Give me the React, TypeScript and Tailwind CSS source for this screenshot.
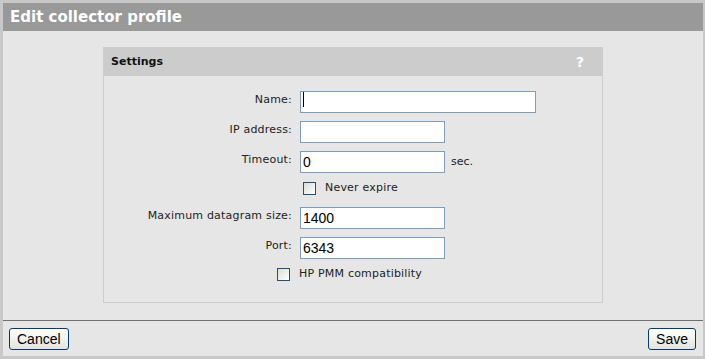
import React from 'react';

const labelFont = { fontFamily: '"DejaVu Sans", Verdana, sans-serif' };

const Field = ({ value, width = 'w-[145px]', caret = false }: { value?: string; width?: string; caret?: boolean }) => (
  <div className={`relative ${width} h-[22px]`}>
    <input
      type="text"
      readOnly
      defaultValue={value}
      className="w-full h-full border border-[#7f9db9] bg-white px-[2px] text-[14px] text-black outline-none font-['Liberation_Sans',Arial,sans-serif]"
    />
    {caret && <span className="absolute left-[3px] top-[3px] w-px h-[15px] bg-black" />}
  </div>
);

const Label = ({ children }: { children: React.ReactNode }) => (
  <div className="text-right text-[11px] text-[#222222] tracking-[0.2px]" style={labelFont}>
    {children}
  </div>
);

const Check = ({ label }: { label: string }) => (
  <div className="flex items-center h-[18px]">
    <span className="w-[13px] h-[13px] border border-[#1c5180] bg-gradient-to-br from-[#dcdcd7] to-white" />
    <span className="ml-[9px] text-[11px] text-[#222222] tracking-[0.2px]" style={labelFont}>
      {label}
    </span>
  </div>
);

const Button = ({ children }: { children: React.ReactNode }) => (
  <button className="h-[22px] px-[7px] border border-[#003c74] rounded-[3px] bg-gradient-to-b from-white to-[#e3e3db] text-[14px] text-black leading-none font-['Liberation_Sans',Arial,sans-serif]">
    {children}
  </button>
);

export default function App() {
  return (
    <div className="w-[705px] h-[359px] border-[3px] border-r-2 border-[#c8c8c8] bg-[#e6e6e6] flex flex-col">
      <div className="h-[28px] bg-[#999999] flex items-center pl-[7px] text-white font-bold text-[15px]" style={labelFont}>
        Edit collector profile
      </div>

      <div className="flex-1 pt-[16px]">
        <div className="mx-auto w-[500px] h-[256px] border border-[#cccccc]">
          <div className="h-[28px] bg-[#cccccc] flex items-center justify-between pl-[7px] pr-[18px]">
            <span className="font-bold text-[11px] text-[#111111]" style={labelFont}>Settings</span>
            <span className="font-bold text-[14px] text-white" style={labelFont}>?</span>
          </div>

          <div className="pt-[13px] grid grid-cols-[188px_1fr] gap-x-[8px] gap-y-[8px] items-center">
            <Label>Name:</Label>
            <Field width="w-[236px]" caret />

            <Label>IP address:</Label>
            <Field />

            <Label>Timeout:</Label>
            <div className="flex items-center">
              <Field value="0" />
              <span className="ml-[6px] mt-[4px] text-[11px] text-[#222222]" style={labelFont}>sec.</span>
            </div>

            <div />
            <div className="pl-[3px]">
              <Check label="Never expire" />
            </div>

            <Label>Maximum datagram size:</Label>
            <Field value="1400" />

            <Label>Port:</Label>
            <Field value="6343" />

            <div className="col-span-2 pl-[173px]">
              <Check label="HP PMM compatibility" />
            </div>
          </div>
        </div>
      </div>

      <div className="h-[36px] border-t border-[#6f6f6f] flex items-start justify-between pt-[7px] pl-[6px] pr-[7px]">
        <Button>Cancel</Button>
        <Button>Save</Button>
      </div>
    </div>
  );
}
